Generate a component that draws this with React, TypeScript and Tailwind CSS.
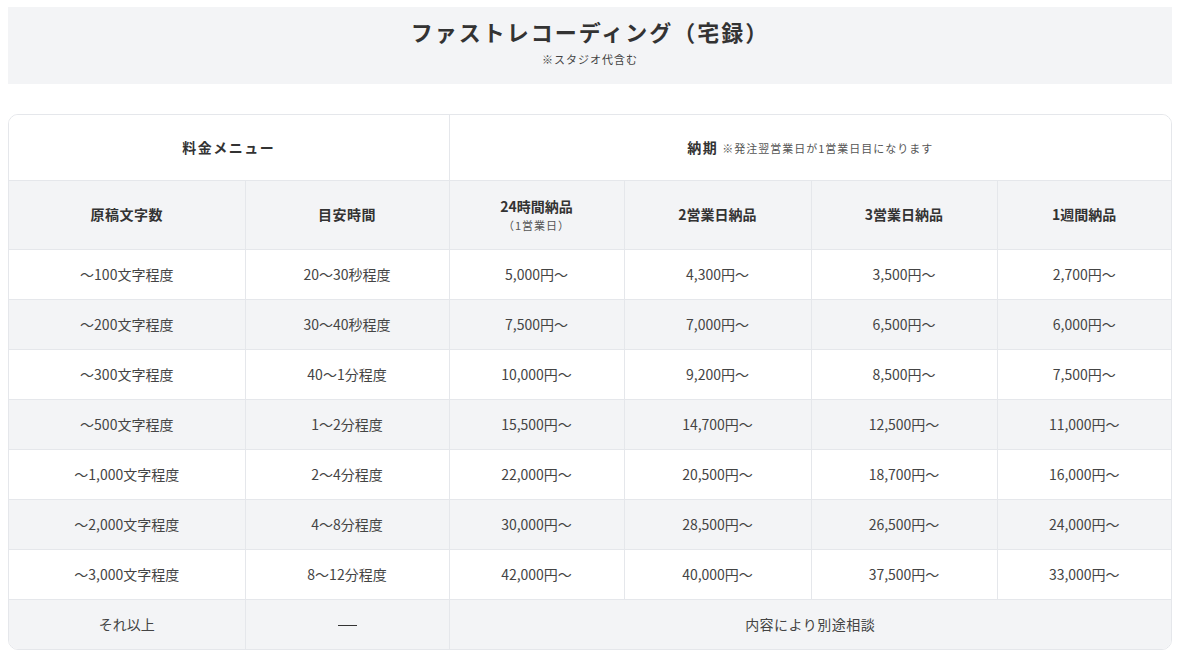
import React from "react";

const font = { fontFamily: '"Noto Sans CJK JP", "Noto Sans", sans-serif' };

const rows: [string, string, string, string, string, string][] = [
  ["～100文字程度", "20～30秒程度", "5,000円～", "4,300円～", "3,500円～", "2,700円～"],
  ["～200文字程度", "30～40秒程度", "7,500円～", "7,000円～", "6,500円～", "6,000円～"],
  ["～300文字程度", "40～1分程度", "10,000円～", "9,200円～", "8,500円～", "7,500円～"],
  ["～500文字程度", "1～2分程度", "15,500円～", "14,700円～", "12,500円～", "11,000円～"],
  ["～1,000文字程度", "2～4分程度", "22,000円～", "20,500円～", "18,700円～", "16,000円～"],
  ["～2,000文字程度", "4～8分程度", "30,000円～", "28,500円～", "26,500円～", "24,000円～"],
  ["～3,000文字程度", "8～12分程度", "42,000円～", "40,000円～", "37,500円～", "33,000円～"],
];

export default function App() {
  return (
    <div className="w-[1181px] h-[656px] bg-white pt-[7px] pl-2 pr-[9px] text-[#333]" style={font}>
      <div className="h-[77px] bg-[#f3f4f6] flex flex-col items-center justify-center">
        <h1 className="text-[22px] font-bold tracking-[2px] leading-[30px] mt-[-8px] text-[#333]">
          ファストレコーディング（宅録）
        </h1>
        <p className="text-[11px] tracking-[1px] leading-[16px] mt-[5px] text-[#444]">※スタジオ代含む</p>
      </div>

      <div className="mt-[30px] rounded-[10px] border border-[#e5e7eb] overflow-hidden">
        <table className="w-full border-collapse table-fixed text-[14px]">
          <colgroup>
            <col className="w-[236px]" />
            <col className="w-[204px]" />
            <col className="w-[175px]" />
            <col className="w-[187px]" />
            <col className="w-[186px]" />
            <col />
          </colgroup>
          <thead>
            <tr className="h-[65px] bg-white">
              <th colSpan={2} className="border-r border-b border-[#e5e7eb] font-bold text-[14px] tracking-[1.5px] text-[#333]">
                料金メニュー
              </th>
              <th colSpan={4} className="border-b border-[#e5e7eb] font-bold text-[#333]">
                <span className="text-[14px] tracking-[1.5px]">納期</span>
                <span className="ml-[4px] text-[11px] font-normal tracking-[1px] text-[#555]">
                  ※発注翌営業日が1営業日目になります
                </span>
              </th>
            </tr>
            <tr className="h-[69px] bg-[#f3f4f6]">
              <th className="border-r border-b border-[#e5e7eb] font-bold tracking-[0.5px]">原稿文字数</th>
              <th className="border-r border-b border-[#e5e7eb] font-bold tracking-[0.5px]">目安時間</th>
              <th className="border-r border-b border-[#e5e7eb] font-bold">
                <div className="leading-[20px]">24時間納品</div>
                <div className="text-[11px] font-normal leading-[18px] tracking-[1px] text-[#555]">（1営業日）</div>
              </th>
              <th className="border-r border-b border-[#e5e7eb] font-bold">2営業日納品</th>
              <th className="border-r border-b border-[#e5e7eb] font-bold">3営業日納品</th>
              <th className="border-b border-[#e5e7eb] font-bold">1週間納品</th>
            </tr>
          </thead>
          <tbody className="text-[#444]">
            {rows.map((r, i) => (
              <tr key={i} className={`h-[50px] ${i % 2 === 1 ? "bg-[#f3f4f6]" : "bg-white"}`}>
                {r.map((c, j) => (
                  <td
                    key={j}
                    className={`text-center border-b border-[#e5e7eb] ${j < 5 ? "border-r" : ""}`}
                  >
                    {c}
                  </td>
                ))}
              </tr>
            ))}
            <tr className="h-[50px] bg-[#f3f4f6]">
              <td className="text-center border-r border-[#e5e7eb]">それ以上</td>
              <td className="text-center border-r border-[#e5e7eb]">
                <span className="inline-block w-[19px] h-px bg-[#333] align-middle" aria-label="――"></span>
              </td>
              <td colSpan={4} className="text-center tracking-[0.5px]">内容により別途相談</td>
            </tr>
          </tbody>
        </table>
      </div>
    </div>
  );
}
